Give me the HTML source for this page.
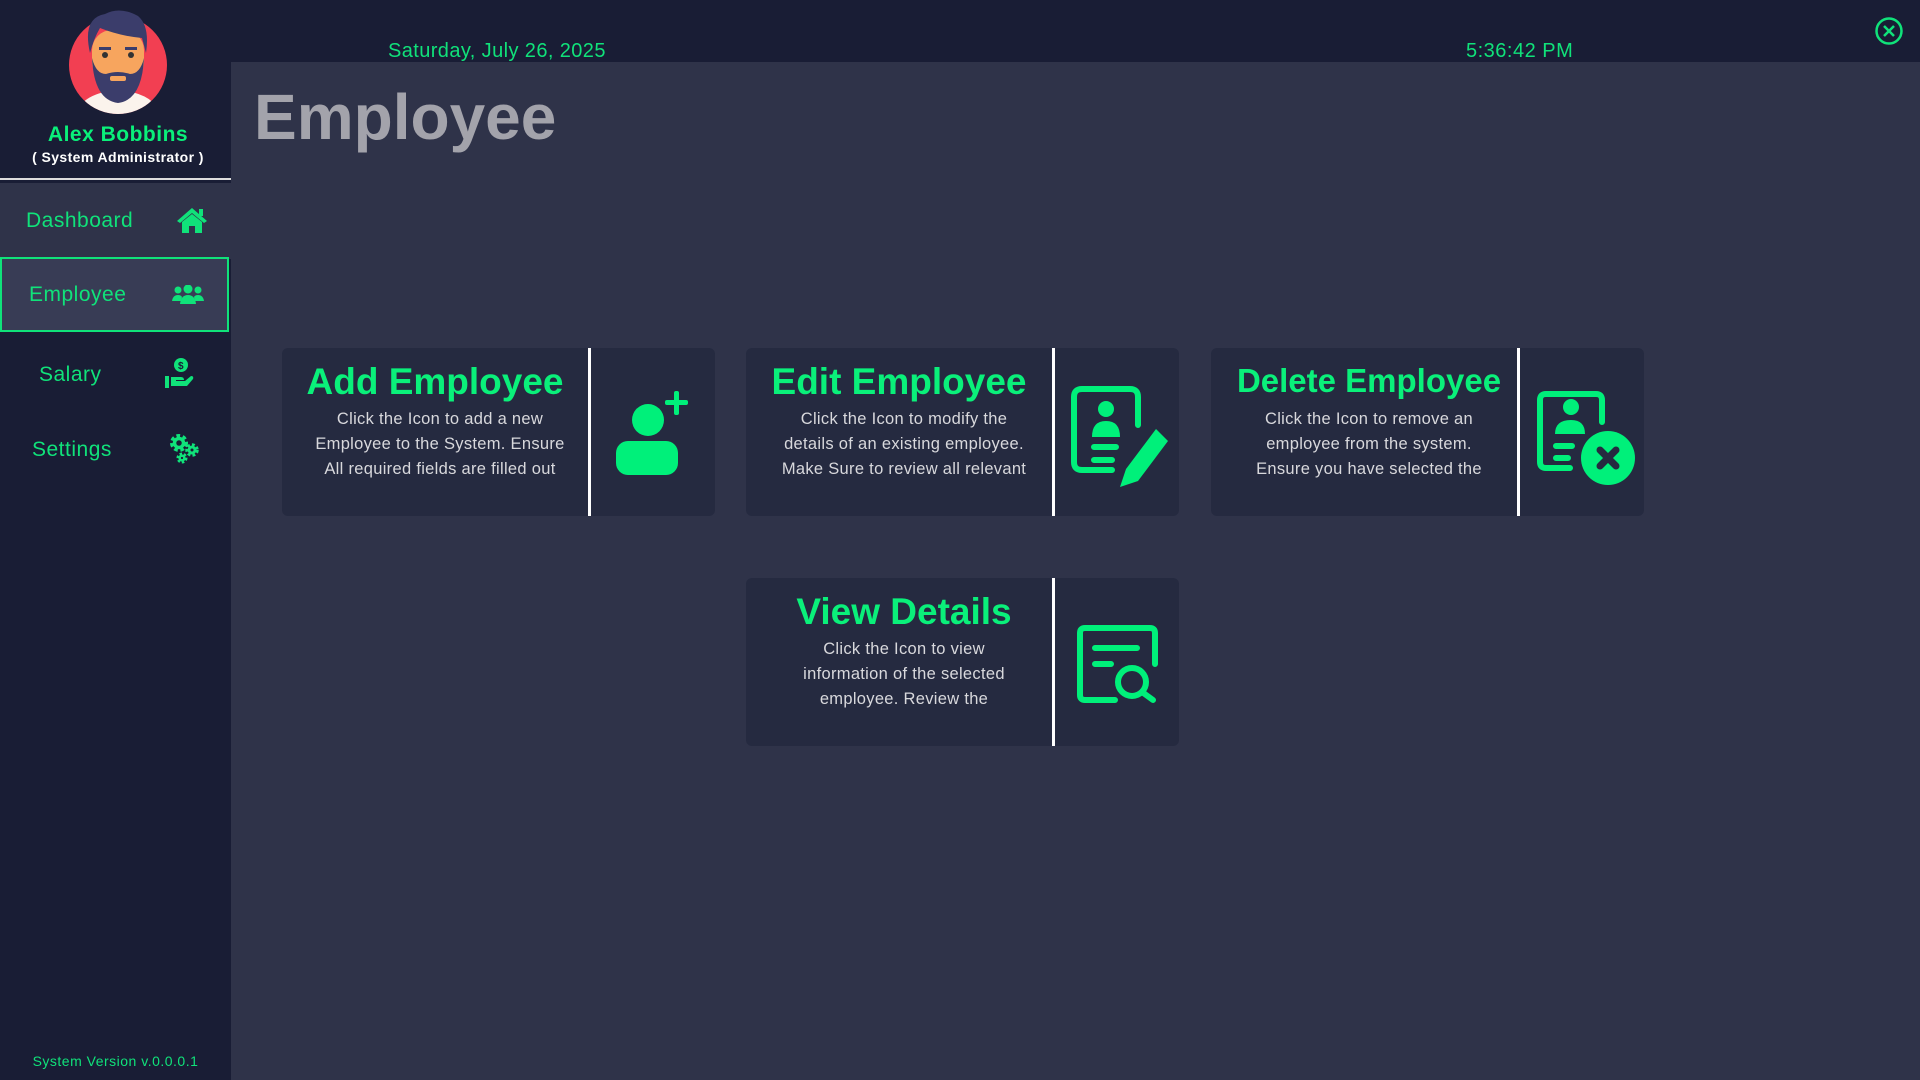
<!DOCTYPE html>
<html><head><meta charset="utf-8"><style>
*{margin:0;padding:0;box-sizing:border-box}
body{width:1920px;height:1080px;background:#191d35;font-family:"Liberation Sans",sans-serif;position:relative;overflow:hidden}
.a{position:absolute}
.main{left:231px;top:62px;width:1689px;height:1018px;background:#2f3349}
.nav{left:0;width:231px;height:76px;color:#10e27a;font-size:21px;letter-spacing:0.5px}
.nav span{position:absolute;top:50%;transform:translateY(-50%)}
.card{background:#252a40;border-radius:6px}
.div{width:3px;background:#fff}
.ct{color:#0af07a;font-weight:bold;text-align:center;white-space:nowrap}
.cd{color:#d8d8dc;font-size:16.5px;line-height:25px;text-align:center;letter-spacing:0.3px}
.g{color:#0af07a}
</style></head><body>
<div class="a main"></div>
<svg class="a" style="left:60px;top:8px" width="118" height="110" viewBox="0 0 118 110">
<defs><clipPath id="c"><circle cx="58" cy="57" r="49"/></clipPath></defs>
<circle cx="58" cy="57" r="49" fill="#f23f52"/>
<g clip-path="url(#c)">
<path d="M14 110 Q20 85 58 82 Q96 85 102 110Z" fill="#fbf3ec"/>
<rect x="32" y="22" width="52" height="52" rx="20" fill="#f7a55e"/>
<path d="M32 50 Q34 92 58 95 Q82 92 84 50 Q80 66 70 66 Q58 62 46 66 Q36 66 32 50Z" fill="#3b3d6b"/>
<rect x="50" y="68" width="16" height="5" rx="2" fill="#f7a55e"/>
</g>
<path d="M30 45 Q22 10 45 6 Q60 -2 78 8 Q90 18 86 45 L82 30 Q60 28 40 20 Q34 30 30 45Z" fill="#3b3d6b"/>
<circle cx="45" cy="47" r="3" fill="#333"/><circle cx="71" cy="47" r="3" fill="#333"/>
<rect x="39" y="39" width="12" height="3" fill="#3b3d6b"/><rect x="65" y="39" width="12" height="3" fill="#3b3d6b"/>
</svg>
<div class="a g" style="left:0;width:236px;top:123px;text-align:center;font-size:21px;font-weight:bold;letter-spacing:0.5px">Alex Bobbins</div>
<div class="a" style="left:0;width:236px;top:149px;text-align:center;font-size:14px;font-weight:bold;color:#fff;letter-spacing:0.4px">( System Administrator )</div>
<div class="a" style="left:0;top:178px;width:231px;height:2px;background:#ddd"></div>
<div class="a nav" style="top:183px;background:#2f3349"><span style="left:26px">Dashboard</span>
<svg class="a" style="left:176px;top:23px" width="32" height="28" viewBox="0 0 32 28"><path d="M16 2 L1 15 L4 17 L16 7 L28 17 L31 15 Z" fill="#10e27a"/><rect x="23" y="3" width="4" height="7" fill="#10e27a"/><path d="M6 16 L16 8 L26 16 V27 H19 V20 H13 V27 H6Z" fill="#10e27a"/></svg></div>
<div class="a nav" style="top:257px;height:75px;background:#383c55;border:2px solid #10e27a;width:229px"><span style="left:27px">Employee</span>
<svg class="a" style="left:170px;top:26px" width="32" height="20" viewBox="0 0 32 20"><g fill="#10e27a"><circle cx="6" cy="5" r="3.5"/><circle cx="26" cy="5" r="3.5"/><circle cx="16" cy="4" r="4.5"/><path d="M0 16 Q1 10 6 10 Q9 10 10 12 L9 16Z"/><path d="M32 16 Q31 10 26 10 Q23 10 22 12 L23 16Z"/><path d="M8 19 Q9 10 16 10 Q23 10 24 19Z"/></g></svg></div>
<div class="a nav" style="top:337px"><span style="left:39px">Salary</span>
<svg class="a" style="left:163px;top:20px" width="32" height="32" viewBox="0 0 32 32"><g fill="#10e27a"><circle cx="18" cy="8" r="7"/><rect x="2" y="19" width="4" height="12"/><path d="M8 20 H18 Q21 20 21 23 H13 V24 H22 L28 19 Q31 19 30 22 L24 29 H8Z"/></g><text x="18" y="12" font-size="10" font-weight="bold" fill="#191d35" text-anchor="middle">$</text></svg></div>
<div class="a nav" style="top:412px"><span style="left:32px">Settings</span>
<svg class="a" style="left:168px;top:20px" width="32" height="32" viewBox="0 0 32 32"><g fill="none" stroke="#10e27a"><circle cx="11" cy="11" r="6" stroke-width="6" stroke-dasharray="3 2.2"/><circle cx="11" cy="11" r="4.5" stroke-width="3.5"/><circle cx="24" cy="18" r="4.5" stroke-width="4.5" stroke-dasharray="2.4 1.8"/><circle cx="24" cy="18" r="3" stroke-width="3"/><circle cx="14" cy="26" r="3.5" stroke-width="4" stroke-dasharray="2 1.6"/><circle cx="14" cy="26" r="2.4" stroke-width="2.5"/></g></svg></div>
<div class="a g" style="left:0;width:231px;top:1053px;text-align:center;font-size:14px;color:#10e27a;letter-spacing:0.5px">System Version v.0.0.0.1</div>
<div class="a g" style="left:388px;top:40px;font-size:20px;color:#10e27a;letter-spacing:0.4px">Saturday, July 26, 2025</div>
<div class="a g" style="left:1466px;top:40px;font-size:20px;color:#10e27a;letter-spacing:0.5px">5:36:42 PM</div>
<svg class="a" style="left:1874px;top:16px" width="30" height="30" viewBox="0 0 30 30"><circle cx="15" cy="15" r="12.5" fill="none" stroke="#10e27a" stroke-width="2.5"/><path d="M10 10 L20 20 M20 10 L10 20" stroke="#10e27a" stroke-width="2.5"/></svg>
<div class="a" style="left:254px;top:80px;font-size:64px;font-weight:bold;color:#a3a3ab">Employee</div>
<div class="a card" style="left:282px;top:348px;width:433px;height:168px"></div>
<div class="a div" style="left:588px;top:348px;height:168px"></div>
<div class="a ct" style="left:282px;width:306px;top:361px;font-size:37px">Add Employee</div>
<div class="a cd" style="left:282px;width:316px;top:407px">Click the Icon to add a new<br>Employee to the System. Ensure<br>All required fields are filled out</div>
<svg class="a" style="left:612px;top:388px" width="84" height="90" viewBox="0 0 84 90"><g fill="#00f07a"><circle cx="36" cy="32" r="16"/><rect x="4" y="53" width="62" height="34" rx="12"/><rect x="62" y="3" width="5" height="24" rx="2"/><rect x="53" y="12" width="23" height="5" rx="2"/></g></svg>
<div class="a card" style="left:746px;top:348px;width:433px;height:168px"></div>
<div class="a div" style="left:1052px;top:348px;height:168px"></div>
<div class="a ct" style="left:746px;width:306px;top:361px;font-size:37px">Edit Employee</div>
<div class="a cd" style="left:746px;width:316px;top:407px">Click the Icon to modify the<br>details of an existing employee.<br>Make Sure to review all relevant</div>
<svg class="a" style="left:1068px;top:385px" width="104" height="104" viewBox="0 0 104 104"><g fill="none" stroke="#00f07a" stroke-width="6" stroke-linecap="round"><path d="M44 85 H14 Q6 85 6 77 V12 Q6 4 14 4 H62 Q70 4 70 12 V40"/><path d="M26 62 H48 M26 75 H44"/></g><g fill="#00f07a"><circle cx="38" cy="24" r="8"/><path d="M24 52 Q24 36 38 36 Q52 36 52 52Z"/><path d="M88 44 L100 56 L70 96 L52 102 L58 84Z"/></g></svg>
<div class="a card" style="left:1211px;top:348px;width:433px;height:168px"></div>
<div class="a div" style="left:1517px;top:348px;height:168px"></div>
<div class="a ct" style="left:1211px;width:316px;top:362px;font-size:33px">Delete Employee</div>
<div class="a cd" style="left:1211px;width:316px;top:407px">Click the Icon to remove an<br>employee from the system.<br>Ensure you have selected the</div>
<svg class="a" style="left:1520px;top:370px" width="130" height="130" viewBox="0 0 130 130"><g fill="none" stroke="#00f07a" stroke-width="6" stroke-linecap="round"><path d="M50 98 H26 Q20 98 20 92 V30 Q20 24 26 24 H76 Q82 24 82 30 V52"/><path d="M36 76 H52 M36 88 H48"/></g><g fill="#00f07a"><circle cx="51" cy="37" r="8"/><path d="M35 64 Q35 50 51 50 Q65 50 65 64Z"/><circle cx="88" cy="88" r="27"/></g><path d="M80 80 L96 96 M96 80 L80 96" stroke="#252a40" stroke-width="7" stroke-linecap="round"/></svg>
<div class="a card" style="left:746px;top:578px;width:433px;height:168px"></div>
<div class="a div" style="left:1052px;top:578px;height:168px"></div>
<div class="a ct" style="left:746px;width:316px;top:591px;font-size:37px">View Details</div>
<div class="a cd" style="left:746px;width:316px;top:637px">Click the Icon to view<br>information of the selected<br>employee. Review the</div>
<svg class="a" style="left:1055px;top:600px" width="130" height="130" viewBox="0 0 130 130"><g fill="none" stroke="#00f07a" stroke-width="6" stroke-linecap="round"><path d="M60 100 H30 Q25 100 25 95 V33 Q25 28 30 28 H95 Q100 28 100 33 V64"/><path d="M40 48 H82 M40 64 H56"/><circle cx="77" cy="82" r="14"/><path d="M87 92 L98 100"/></g></svg>
</body></html>
